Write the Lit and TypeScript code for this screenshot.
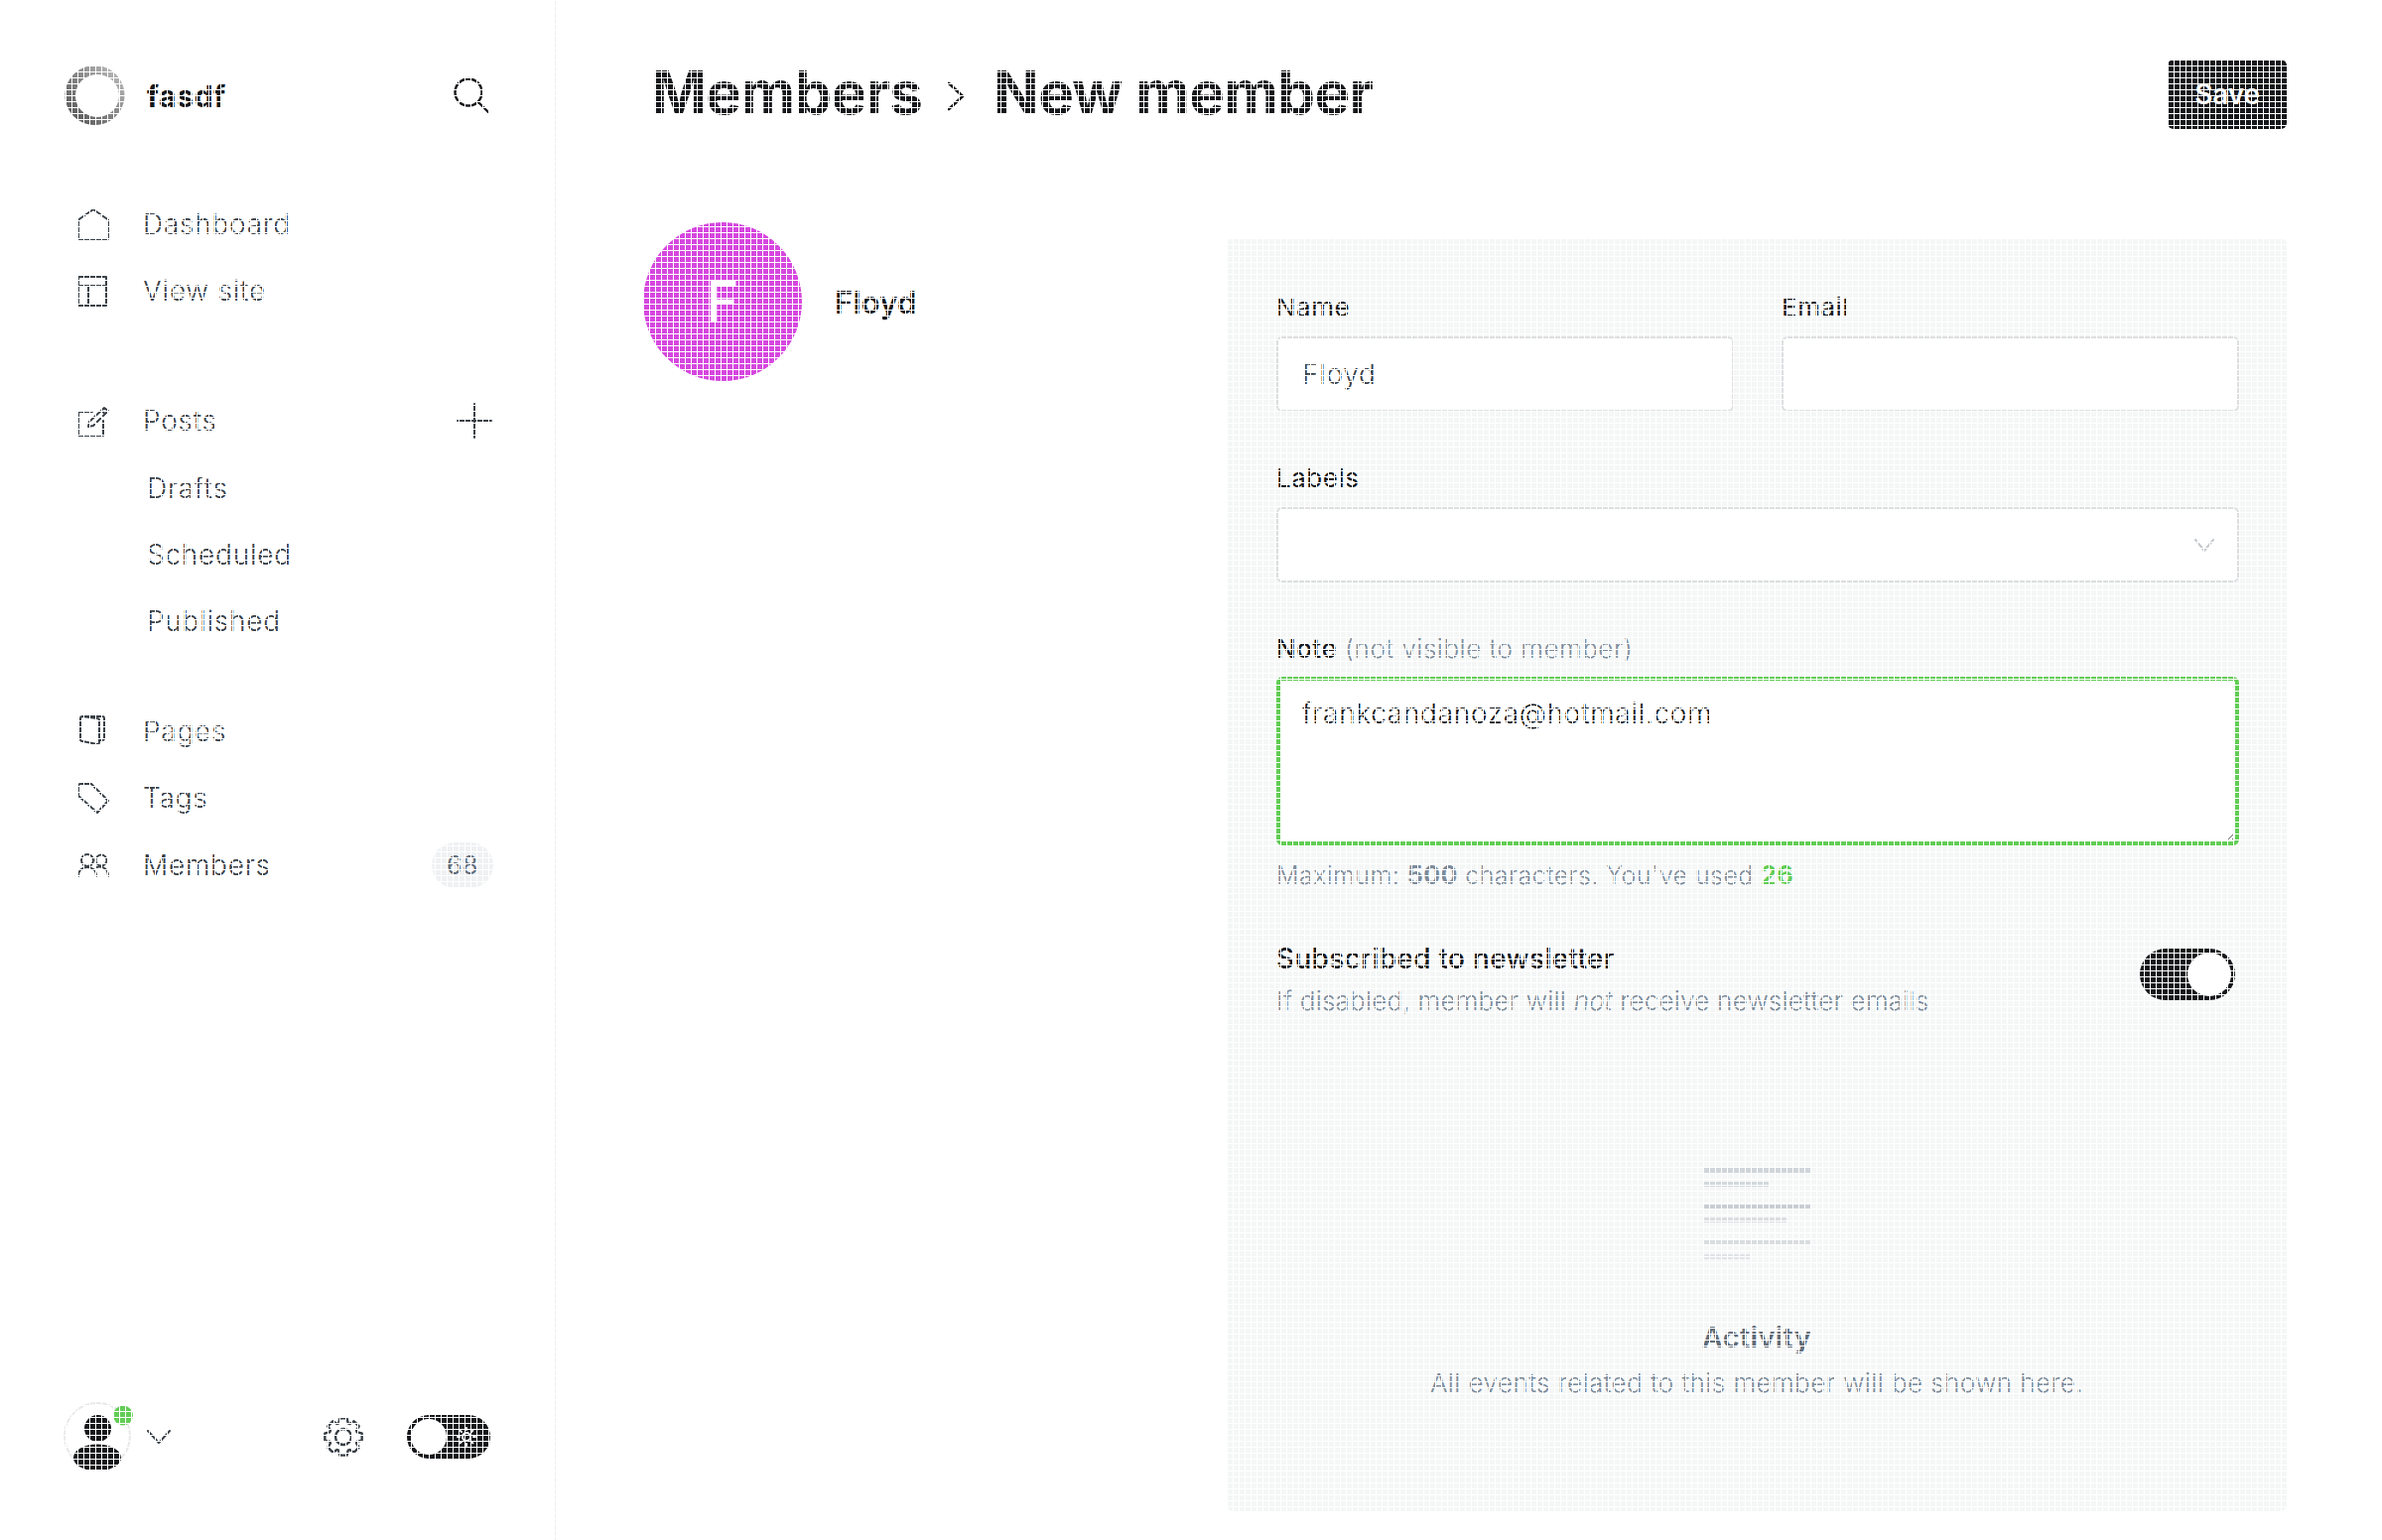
import { LitElement, html, css } from "lit";
import { customElement } from "lit/decorators.js";

function gearPath(cx: number, cy: number, r1: number, r2: number, n: number): string {
  const pts: string[] = [];
  const step = (Math.PI * 2) / n;
  for (let i = 0; i < n; i++) {
    const a = i * step - Math.PI / 2;
    const seq: [number, number][] = [
      [r2, a - step * 0.42],
      [r1, a - step * 0.24],
      [r1, a + step * 0.24],
      [r2, a + step * 0.42],
    ];
    for (const [r, t] of seq) {
      pts.push(`${(cx + r * Math.cos(t)).toFixed(2)} ${(cy + r * Math.sin(t)).toFixed(2)}`);
    }
  }
  return "M" + pts.join("L") + "Z";
}

const emptyLines = [
  { w: 107, c: "#d0d5da", gap: 8.5 },
  { w: 65, c: "#d3d8dc", gap: 18 },
  { w: 107, c: "#c9ced3", gap: 8.5 },
  { w: 83, c: "#dadee1", gap: 18 },
  { w: 107, c: "#d9dde0", gap: 8.5 },
  { w: 46, c: "#e0e3e6", gap: 0 },
];

@customElement("app-root")
export class AppRoot extends LitElement {
  static styles = css`
    :host {
      display: block;
      position: relative;
      width: 2400px;
      height: 1552px;
      overflow: hidden;
      background: #fff;
      font-family: Inter, "Noto Sans", sans-serif;
      color: #15171a;
    }
    .grid {
      position: absolute;
      inset: 0;
      pointer-events: none;
      background-image: linear-gradient(#fff 1px, transparent 1px), linear-gradient(90deg, #fff 1px, transparent 1px);
      background-size: 6px 6px;
      z-index: 5;
    }
    .app {
      display: flex;
      height: 1552px;
    }
    svg {
      display: block;
      flex: none;
    }
    .side {
      width: 560px;
      box-sizing: border-box;
      border-right: 2px solid #eef0f2;
      display: flex;
      flex-direction: column;
      flex: none;
    }
    .brand {
      display: flex;
      align-items: center;
      height: 60px;
      margin-top: 66px;
      padding: 0 65px;
    }
    .brand .name {
      margin-left: 22px;
      font-size: 30px;
      font-weight: 700;
      letter-spacing: 0.7px;
      flex: 1;
      position: relative;
      top: 1px;
    }
    .nav {
      display: flex;
      flex-direction: column;
    }
    .nav.a {
      margin-top: 66.3px;
    }
    .nav.b {
      margin-top: 63.8px;
    }
    .nav.c {
      margin-top: 43.2px;
    }
    .row {
      height: 67.33px;
      display: flex;
      align-items: center;
      color: #394047;
      font-size: 28px;
      font-weight: 300;
      letter-spacing: 0.75px;
      padding-left: 78px;
      padding-right: 61px;
      position: relative;
    }
    .row .ic {
      width: 34px;
      display: flex;
      justify-content: flex-start;
      margin-right: 32px;
    }
    .row.sub {
      padding-left: 148px;
    }
    .row .grow {
      flex: 1;
    }
    .plus {
      margin-right: 1px;
    }
    .badge {
      width: 62px;
      height: 46px;
      border-radius: 23px;
      background: #eff1f3;
      color: #626d79;
      font-size: 25px;
      font-weight: 400;
      letter-spacing: 0.5px;
      display: flex;
      align-items: center;
      justify-content: center;
    }
    .foot {
      margin-top: auto;
      margin-bottom: 72px;
      padding: 0 64px 0 64px;
      display: flex;
      align-items: center;
      height: 67px;
    }
    .foot .chev {
      margin-left: 14px;
      margin-top: 2px;
    }
    .foot .gear {
      margin-left: auto;
      margin-top: 2px;
    }
    .mode {
      margin-left: 44px;
      margin-top: 2px;
      width: 84px;
      height: 44px;
      border-radius: 22px;
      background: #15171a;
      display: flex;
      align-items: center;
      justify-content: space-between;
      padding: 0 14px 0 4px;
      box-sizing: border-box;
    }
    .mode .knob {
      width: 36px;
      height: 36px;
      border-radius: 50%;
      background: #fff;
    }
    .main {
      flex: 1;
      display: flex;
      flex-direction: column;
      padding: 60px 96px 0 96px;
      min-width: 0;
    }
    .head {
      display: flex;
      align-items: center;
      justify-content: space-between;
      height: 70px;
    }
    .crumbs {
      display: flex;
      align-items: center;
      font-size: 60px;
      font-weight: 700;
      letter-spacing: -0.7px;
      line-height: 70px;
      position: relative;
      top: -2px;
    }
    .crumbs svg {
      margin: 8px 29px 0 25px;
    }
    .save {
      width: 120px;
      height: 70px;
      border-radius: 6px;
      background: #15171a;
      color: #fff;
      font-size: 28px;
      font-weight: 600;
      letter-spacing: -0.2px;
      display: flex;
      align-items: center;
      justify-content: center;
      box-sizing: border-box;
    }
    .body {
      display: flex;
      align-items: flex-start;
      margin-top: 94px;
      margin-left: -8px;
      position: relative;
    }
    .who {
      display: flex;
      align-items: center;
      width: 588px;
      flex: none;
    }
    .pic {
      width: 160px;
      height: 160px;
      border-radius: 50%;
      background: #d647df;
      color: #fff;
      font-size: 56px;
      font-weight: 500;
      display: flex;
      align-items: center;
      justify-content: center;
      flex: none;
    }
    .who .nm {
      margin-left: 33px;
      font-size: 31px;
      font-weight: 600;
      letter-spacing: 0.2px;
    }
    .panel {
      flex: 1;
      margin-top: 16px;
      background: #f5f7f7;
      box-sizing: border-box;
      padding: 52px 48px 111px 50px;
      border-radius: 6px;
    }
    .two {
      display: grid;
      grid-template-columns: 1fr 1fr;
      gap: 48px;
    }
    .lab {
      display: block;
      font-size: 26px;
      font-weight: 400;
      line-height: 36px;
      margin-bottom: 11px;
      letter-spacing: 0.5px;
    }
    .lab .strong {
      color: inherit;
      font-weight: 500;
    }
    .lab span {
      color: #7c8b9a;
      font-weight: 300;
    }
    .inp {
      display: block;
      width: 100%;
      box-sizing: border-box;
      height: 76px;
      border: 2px solid #dcdee0;
      border-radius: 6px;
      background: #fff;
      font: 300 28px Inter, "Noto Sans", sans-serif;
      letter-spacing: 0.7px;
      color: #394047;
      padding: 0 24px;
      outline: none;
      margin: 0;
    }
    .group {
      margin-top: 49px;
    }
    .sel {
      display: flex;
      align-items: center;
      justify-content: flex-end;
      padding-right: 23px;
    }
    textarea.note {
      display: block;
      width: 100%;
      box-sizing: border-box;
      height: 170px;
      border: 4px solid #62cd55;
      border-radius: 6px;
      background: #fff;
      font: 300 28px/40px Inter, "Noto Sans", sans-serif;
      letter-spacing: 0.7px;
      color: #15171a;
      padding: 13px 22px;
      outline: none;
      margin: -1px 0 0;
    }
    .hint {
      margin-top: 12px;
      font-size: 25px;
      font-weight: 300;
      line-height: 36px;
      color: #7c8b9a;
      letter-spacing: 0.44px;
    }
    .hint b {
      font-weight: 700;
    }
    .hint .ok {
      color: #62cd55;
      font-weight: 700;
    }
    .sub-row {
      display: flex;
      justify-content: space-between;
      align-items: flex-start;
      margin-top: 48px;
    }
    .sub-t {
      font-size: 28px;
      font-weight: 500;
      line-height: 36px;
      letter-spacing: 0.3px;
    }
    .sub-d {
      margin-top: 7px;
      font-size: 26px;
      font-weight: 300;
      line-height: 36px;
      color: #7c8b9a;
      letter-spacing: 0.22px;
    }
    .sw {
      width: 96px;
      height: 52px;
      border-radius: 26px;
      background: #15171a;
      display: flex;
      justify-content: flex-end;
      align-items: center;
      padding-right: 4px;
      box-sizing: border-box;
      margin: 8px 4px 0 0;
    }
    .sw i {
      display: block;
      width: 44px;
      height: 44px;
      border-radius: 50%;
      background: #fff;
    }
    .empty {
      margin-top: 150px;
      display: flex;
      flex-direction: column;
      align-items: center;
      text-align: center;
      margin-left: -2px;
    }
    .lines {
      width: 107px;
      display: flex;
      flex-direction: column;
      align-items: flex-start;
    }
    .lines div {
      height: 5px;
    }
    .empty h4 {
      margin: 61px 0 0;
      font-size: 29px;
      font-weight: 600;
      line-height: 36px;
      letter-spacing: 0.3px;
      color: #626d79;
    }
    .empty p {
      margin: 10px 0 0;
      font-size: 26px;
      font-weight: 300;
      line-height: 36px;
      color: #7c8b9a;
      letter-spacing: 0.42px;
    }
  `;

  private icon(d: string, w = 32, h = 32) {
    return html`<svg width=${w} height=${h} viewBox="0 0 ${w} ${h}" fill="none" stroke="#394047" stroke-width="2" stroke-linejoin="round" stroke-linecap="round"><path d=${d}></path></svg>`;
  }

  render() {
    return html`
      <div class="app">
        <aside class="side">
          <div class="brand">
            <svg width="61" height="60" viewBox="0 0 61 60">
              <defs>
                <linearGradient id="lg" x1="0" y1="1" x2="1" y2="0">
                  <stop offset="0" stop-color="#4f4f4f"></stop>
                  <stop offset="0.55" stop-color="#8a8a8a"></stop>
                  <stop offset="1" stop-color="#c8c8c8"></stop>
                </linearGradient>
              </defs>
              <path fill="url(#lg)" fill-rule="evenodd" d="M30.5 0a30 30 0 1 0 .01 0ZM33 9a22 21.5 0 1 1-.01 0Z"></path>
            </svg>
            <span class="name">fasdf</span>
            <svg class="search" width="36" height="36" viewBox="0 0 36 36" fill="none" stroke="#15171a" stroke-width="2.4" stroke-linecap="round">
              <circle cx="15" cy="15" r="13.5"></circle>
              <path d="M25 25l10 10"></path>
            </svg>
          </div>

          <nav class="nav a">
            <div class="row"><span class="ic">${this.icon("M1 11.5 16 1l15 10.5V31H1Z")}</span>Dashboard</div>
            <div class="row"><span class="ic">${this.icon("M1 1h28v29H1ZM1 10h28M11 10v20", 30, 31)}</span>View site</div>
          </nav>

          <nav class="nav b">
            <div class="row">
              <span class="ic">${this.icon("M15 6H1v24h25V15M11 21l1-5L27 2l4 3-15 15ZM24 5l4 3", 32, 31)}</span>
              <span class="grow">Posts</span>
              <svg class="plus" width="36" height="36" viewBox="0 0 36 36" stroke="#394047" stroke-width="2" stroke-linecap="round"><path d="M18 1v34M1 18h34"></path></svg>
            </div>
            <div class="row sub">Drafts</div>
            <div class="row sub">Scheduled</div>
            <div class="row sub">Published</div>
          </nav>

          <nav class="nav c">
            <div class="row"><span class="ic"><span style="margin-left:2px">${this.icon("M3 1H23a2 2 0 0 1 2 2V23a2 2 0 0 1-2 2H20M3 1a2 2 0 0 0-2 2V24a2 2 0 0 0 2 2L18 29a2 2 0 0 0 2-2V5a2 2 0 0 0-2-2L3 1", 27, 31)}</span></span>Pages</div>
            <div class="row"><span class="ic">${this.icon("M3 1h11l17 17-11 12L1 13V3a2 2 0 0 1 2-2Z", 32, 31)}</span>Tags</div>
            <div class="row">
              <span class="ic">
                <svg width="32" height="24" viewBox="0 0 32 24" fill="none" stroke="#394047" stroke-width="2" stroke-linecap="round">
                  <circle cx="10" cy="7" r="6"></circle>
                  <circle cx="24" cy="7" r="5.5"></circle>
                  <path d="M1 23c0-6 4-9 9-9s9 3 9 9M19 14c3-1 12-1 12 9"></path>
                </svg>
              </span>
              <span class="grow">Members</span>
              <span class="badge">68</span>
            </div>
          </nav>

          <div class="foot">
            <svg width="70" height="68" viewBox="0 0 70 68">
              <circle cx="34" cy="34" r="33" fill="none" stroke="#e8e9eb" stroke-width="2"></circle>
              <circle cx="34.5" cy="26.5" r="13.5" fill="#15171a"></circle>
              <ellipse cx="34" cy="56" rx="24" ry="13.5" fill="#15171a"></ellipse>
              <circle cx="60" cy="13.5" r="10" fill="#62cd55"></circle>
            </svg>
            <svg class="chev" width="24" height="14" viewBox="0 0 24 14" fill="none" stroke="#394047" stroke-width="2" stroke-linecap="round" stroke-linejoin="round"><path d="M1 1l11 12L23 1"></path></svg>
            <svg class="gear" width="40" height="40" viewBox="0 0 40 40" fill="none" stroke="#394047" stroke-width="2.4" stroke-linejoin="round">
              <path d=${gearPath(20, 20, 19, 14.5, 8)}></path>
              <circle cx="20" cy="20" r="8"></circle>
            </svg>
            <div class="mode">
              <span class="knob"></span>
              <svg width="20" height="20" viewBox="0 0 20 20" fill="none" stroke="#fff" stroke-width="2" stroke-linecap="round">
                <circle cx="10" cy="10" r="4"></circle>
                <path d="M10 1v2M10 17v2M1 10h2M17 10h2M3.6 3.6 5 5M15 15l1.4 1.4M3.6 16.4 5 15M15 5l1.4-1.4"></path>
              </svg>
            </div>
          </div>
        </aside>

        <main class="main">
          <header class="head">
            <div class="crumbs">
              <span>Members</span>
              <svg width="18" height="30" viewBox="0 0 18 30" fill="none" stroke="#15171a" stroke-width="2.6" stroke-linecap="round" stroke-linejoin="round"><path d="M2 2l14 13L2 28"></path></svg>
              <span>New member</span>
            </div>
            <div class="save">Save</div>
          </header>

          <div class="body">
            <div class="who">
              <div class="pic">F</div>
              <div class="nm">Floyd</div>
            </div>
            <section class="panel">
              <div class="two">
                <div>
                  <label class="lab">Name</label>
                  <input class="inp" .value=${"Floyd"} />
                </div>
                <div>
                  <label class="lab">Email</label>
                  <input class="inp" />
                </div>
              </div>
              <div class="group">
                <label class="lab">Labels</label>
                <div class="inp sel">
                  <svg width="20" height="13" viewBox="0 0 20 13" fill="none" stroke="#c3c8cd" stroke-width="2" stroke-linecap="round" stroke-linejoin="round"><path d="M1 1l9 11 9-11"></path></svg>
                </div>
              </div>
              <div class="group">
                <label class="lab"><b class="strong">Note</b> <span>(not visible to member)</span></label>
                <textarea class="note" .value=${"frankcandanoza@hotmail.com"}></textarea>
                <div class="hint">Maximum: <b>500</b> characters. You've used <span class="ok">26</span></div>
              </div>
              <div class="sub-row">
                <div>
                  <div class="sub-t">Subscribed to newsletter</div>
                  <div class="sub-d">If disabled, member will <em>not</em> receive newsletter emails</div>
                </div>
                <div class="sw"><i></i></div>
              </div>
              <div class="empty">
                <div class="lines">
                  ${emptyLines.map(
                    (l) => html`<div style="width:${l.w}px;background:${l.c};margin-bottom:${l.gap}px"></div>`
                  )}
                </div>
                <h4>Activity</h4>
                <p>All events related to this member will be shown here.</p>
              </div>
            </section>
          </div>
        </main>
      </div>
      <div class="grid"></div>
    `;
  }
}
